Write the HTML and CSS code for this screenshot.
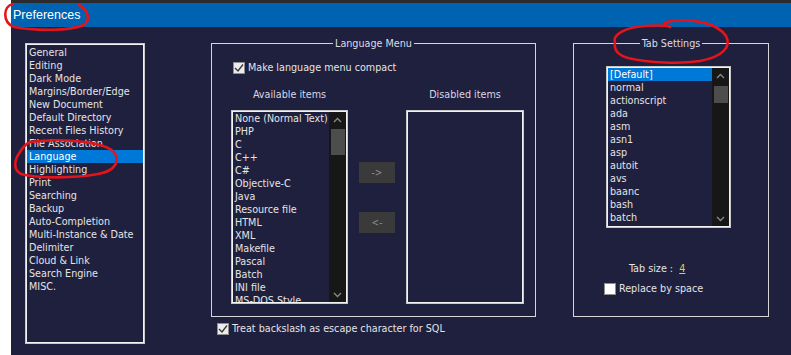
FILE: index.html
```html
<!DOCTYPE html>
<html>
<head>
	<title>Preferences</title>
	<link rel="stylesheet" href="styles.css">
</head>
<body>
<div class="frame">
	<div class="topstrip"></div>
	<div class="titlebar">Preferences</div>

	<div class="dialog">
		<ul class="catlist">
			<li>General</li>
			<li>Editing</li>
			<li>Dark Mode</li>
			<li>Margins/Border/Edge</li>
			<li>New Document</li>
			<li>Default Directory</li>
			<li>Recent Files History</li>
			<li>File Association</li>
			<li class="sel">Language</li>
			<li>Highlighting</li>
			<li>Print</li>
			<li>Searching</li>
			<li>Backup</li>
			<li>Auto-Completion</li>
			<li>Multi-Instance &amp; Date</li>
			<li>Delimiter</li>
			<li>Cloud &amp; Link</li>
			<li>Search Engine</li>
			<li>MISC.</li>
		</ul>

		<div class="midcol">
			<fieldset class="group langgroup">
				<legend>Language Menu</legend>
				<label class="checkrow compact">
					<span class="box checked"><svg width="10" height="10" viewBox="0 0 10 10"><path d="M1 5 L4 8 L9 1.5" fill="none" stroke="#3a3a3a" stroke-width="1.4"/></svg></span>
					Make language menu compact
				</label>
				<div class="lm-grid">
					<div class="lm-head">Available items</div>
					<div></div>
					<div class="lm-head">Disabled items</div>

					<div class="listbox avail">
						<ul class="items">
							<li>None (Normal Text)</li>
							<li>PHP</li>
							<li>C</li>
							<li>C++</li>
							<li>C#</li>
							<li>Objective-C</li>
							<li>Java</li>
							<li>Resource file</li>
							<li>HTML</li>
							<li>XML</li>
							<li>Makefile</li>
							<li>Pascal</li>
							<li>Batch</li>
							<li>INI file</li>
							<li>MS-DOS Style</li>
						</ul>
						<div class="scrollbar">
							<svg class="arrow" width="17" height="17" viewBox="0 0 17 17"><path d="M5 10 L8.5 6.5 L12 10" fill="none" stroke="#8a8a8a" stroke-width="1.3"/></svg>
							<div class="thumb avail-thumb"></div>
							<div class="spacer"></div>
							<svg class="arrow" width="17" height="14" viewBox="0 0 17 14"><path d="M5 5 L8.5 8.5 L12 5" fill="none" stroke="#8a8a8a" stroke-width="1.3"/></svg>
						</div>
					</div>
					<div class="movebtns">
						<div class="btn">-&gt;</div>
						<div class="btn">&lt;-</div>
					</div>
					<div class="listbox disabled"></div>
				</div>
			</fieldset>
			<label class="checkrow sqlrow">
				<span class="box checked"><svg width="10" height="10" viewBox="0 0 10 10"><path d="M1 5 L4 8 L9 1.5" fill="none" stroke="#3a3a3a" stroke-width="1.4"/></svg></span>
				Treat backslash as escape character for SQL
			</label>
		</div>

		<fieldset class="group tabgroup">
			<legend>Tab Settings</legend>
			<div class="listbox tablist">
				<ul class="items">
					<li class="sel">[Default]</li>
					<li>normal</li>
					<li>actionscript</li>
					<li>ada</li>
					<li>asm</li>
					<li>asn1</li>
					<li>asp</li>
					<li>autoit</li>
					<li>avs</li>
					<li>baanc</li>
					<li>bash</li>
					<li>batch</li>
					<li>blitzbasic</li>
				</ul>
				<div class="scrollbar">
					<svg class="arrow" width="17" height="18" viewBox="0 0 17 18"><path d="M5 10 L8.5 6.5 L12 10" fill="none" stroke="#8a8a8a" stroke-width="1.3"/></svg>
					<div class="thumb tab-thumb"></div>
					<div class="spacer"></div>
					<svg class="arrow" width="17" height="14" viewBox="0 0 17 14"><path d="M5 5 L8.5 8.5 L12 5" fill="none" stroke="#8a8a8a" stroke-width="1.3"/></svg>
				</div>
			</div>
			<div class="tabsize">Tab size : &nbsp;<span class="num">4</span></div>
			<label class="checkrow replace">
				<span class="box"></span>
				Replace by space
			</label>
		</fieldset>
	</div>
</div>

<svg class="marks" width="791" height="355" viewBox="0 0 791 355">
	<path d="M13 4 C3 6, 2 22, 14 27 C35 31, 70 31, 84 25 C91 19, 88 10, 79 5" />
	<path d="M30 142 C60 138, 100 141, 113 151 C121 160, 116 171, 98 174 C75 178, 40 179, 21 174 C13 170, 14 160, 20 152 C23 147, 26 144, 30 142" />
	<path d="M615 43 C612 35, 625 27, 645 26 C660 25, 672 26, 670 27 C660 24, 664 22, 672 21 C695 18, 718 24, 726 36 C732 47, 722 57, 700 61 C680 64, 650 63, 628 58 C617 55, 614 50, 615 43" />
</svg>
</body>
</html>
```

FILE: styles.css
```css
body {
	margin: 0;
	background: #ffffff;
	font-family: "DejaVu Sans Condensed", "Liberation Sans", sans-serif;
	font-size: 10.7px;
	color: #e4e4e4;
	overflow: hidden;
}

.frame {
	margin-left: 11px;
	width: 780px;
	height: 355px;
	display: flex;
	flex-direction: column;
}

.topstrip {
	height: 3px;
	background: #2b2b2e;
}

.titlebar {
	height: 24px;
	background: #0063b1;
	color: #ffffff;
	font-family: "Liberation Sans", sans-serif;
	font-size: 12.5px;
	line-height: 24px;
	padding-left: 2px;
}

.dialog {
	flex: 1;
	background: #1f1f3e;
	display: flex;
	align-items: flex-start;
	padding: 10px 0 0 14px;
}

ul {
	list-style: none;
	margin: 0;
	padding: 0;
}

li {
	height: 13px;
	line-height: 13px;
	white-space: nowrap;
}

.catlist {
	width: 120px;
	height: 301px;
	box-sizing: border-box;
	margin-top: 6px;
	border: 1px solid #c8c8c8;
	box-shadow: inset 0 0 0 1px #f2f2f2;
	padding: 2px 1px 0 1px;
}

.catlist li {
	padding-left: 2px;
}

.sel {
	background: #0078d7;
	color: #ffffff;
}

.midcol {
	margin-left: 66px;
	display: flex;
	flex-direction: column;
}

.group {
	margin: 0;
	padding: 0;
	border: 1px solid #d6d6d6;
	box-sizing: border-box;
	height: 280px;
	min-width: 0;
}

.group legend {
	margin: 0 auto;
	padding: 0 2px;
	line-height: 13px;
	color: #dcdce6;
}

.langgroup {
	width: 325px;
}

.tabgroup {
	width: 196px;
	margin-left: 37px;
}

.checkrow {
	display: flex;
	align-items: center;
	height: 13px;
	line-height: 13px;
	gap: 3px;
}

.box {
	width: 12px;
	height: 12px;
	box-sizing: border-box;
	background: #ffffff;
	border: 1px solid #8e8e8e;
	display: flex;
	align-items: center;
	justify-content: center;
}

.box.checked {
	background: #ececec;
}

.compact {
	margin: 11px 0 0 21px;
}

.sqlrow {
	margin: 5px 0 0 6px;
}

.lm-grid {
	display: grid;
	grid-template-columns: 117px 36px 118px;
	grid-template-rows: 13px 194px;
	column-gap: 11px;
	row-gap: 9px;
	margin: 14px 0 0 19px;
}

.lm-head {
	text-align: center;
	line-height: 13px;
	color: #d8d8e4;
}

.listbox {
	box-sizing: border-box;
	border: 1px solid #c8c8c8;
	box-shadow: inset 0 0 0 1px #f2f2f2;
	padding: 1px;
	display: flex;
	overflow: hidden;
}

.items {
	flex: 1;
	overflow: hidden;
}

.items li {
	padding-left: 2px;
}

.scrollbar {
	width: 17px;
	background: #171717;
	display: flex;
	flex-direction: column;
	align-items: center;
}

.arrow {
	display: block;
	flex: none;
}

.thumb {
	width: 14px;
	background: #4d4d4d;
	flex: none;
}

.avail-thumb {
	height: 26px;
}

.tab-thumb {
	height: 17px;
}

.spacer {
	flex: 1;
}

.movebtns {
	display: flex;
	flex-direction: column;
	gap: 29px;
	padding-top: 52px;
}

.btn {
	height: 21px;
	background: #3a3a3a;
	color: #8c8c8c;
	text-align: center;
	line-height: 21px;
	font-size: 10px;
}

.tablist {
	width: 125px;
	height: 162px;
	margin: 16px 0 0 32px;
}

.tabsize {
	margin: 34px 0 0 55px;
	line-height: 13px;
}

.num {
	color: #d6d63a;
	text-decoration: underline;
}

.replace {
	margin: 7px 0 0 30px;
}

.marks {
	position: absolute;
	left: 0;
	top: 0;
	pointer-events: none;
}

.marks path {
	fill: none;
	stroke: #e3141b;
	stroke-width: 2.6;
	stroke-linecap: round;
}
```
